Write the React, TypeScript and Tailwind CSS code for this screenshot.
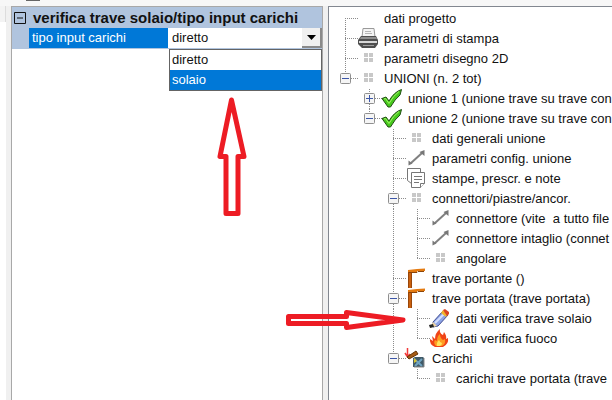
import type { ReactNode } from "react";

type IconName = "none" | "printer" | "dots" | "check" | "line" | "copy" | "beam" | "pencil" | "flame" | "load";

// one letter per 24px column:
// " " empty, "f" first branch, "t" branch, "l" last branch, "v" line passing through,
// "m" collapse box, "M" collapse box with line below, "p" expand box
type Row = { guides: string; icon: IconName; text: string };

const rows: Row[] = [
  { guides: "f", icon: "none", text: "dati progetto" },
  { guides: "t", icon: "printer", text: "parametri di stampa" },
  { guides: "t", icon: "dots", text: "parametri disegno 2D" },
  { guides: "m", icon: "dots", text: "UNIONI (n. 2 tot)" },
  { guides: " p", icon: "check", text: "unione 1 (unione trave su trave con" },
  { guides: " m", icon: "check", text: "unione 2 (unione trave su trave con" },
  { guides: "  t", icon: "dots", text: "dati generali unione" },
  { guides: "  t", icon: "line", text: "parametri config. unione" },
  { guides: "  t", icon: "copy", text: "stampe, prescr. e note" },
  { guides: "  M", icon: "dots", text: "connettori/piastre/ancor." },
  { guides: "  vt", icon: "line", text: "connettore (vite  a tutto file" },
  { guides: "  vt", icon: "line", text: "connettore intaglio (connet" },
  { guides: "  vl", icon: "dots", text: "angolare" },
  { guides: "  t", icon: "beam", text: "trave portante ()" },
  { guides: "  M", icon: "beam", text: "trave portata (trave portata)" },
  { guides: "  vt", icon: "pencil", text: "dati verifica trave solaio" },
  { guides: "  vl", icon: "flame", text: "dati verifica fuoco" },
  { guides: "  m", icon: "load", text: "Carichi" },
  { guides: "   l", icon: "dots", text: "carichi trave portata (trave" },
];

const icons: Record<IconName, ReactNode> = {
  none: null,
  printer: (
    <>
      <path d="M5 8L6-.5h11L18 8" fill="#f4f4f4" stroke="#9a9a9a" />
      <path d="M8 2.500h6M8 4.500h7" stroke="#b5b5b5" />
      <path d="M4 7h15l2 4v4l-3 4H5l-4-4v-4z" fill="#4f4f4f" />
      <path d="M4 8h15l1 2H3z" fill="#8f8f8f" />
      <path d="M2 12h18v2H2z" fill="#d8d8d8" />
      <path d="M6 16.500h11" stroke="#a0a0a0" />
    </>
  ),
  dots: <path d="M7 4h4v4H7zM12 4h4v4h-4zM7 9h4v4H7zM12 9h4v4h-4z" fill="#c8c8c8" />,
  check: (
    <>
      <path
        d="M1 9.500L5 8l3 4Q13 3 20.500.5L19 6Q14 10 9.500 18H7z"
        fill="#45c81c"
        stroke="#1f4d12"
        strokeLinejoin="round"
      />
      <path d="M3 10l1.500-.5 3.500 5Q12 7 18 2.500" stroke="#a4f36a" />
    </>
  ),
  line: (
    <>
      <path d="M6 14L17 4" stroke="#808080" strokeWidth="2" />
      <path d="M3.500 16.500v-5l4 3zM19.500 1v6l-5-4z" fill="#777" />
    </>
  ),
  copy: (
    <g fill="#fff" stroke="#777" strokeLinejoin="round">
      <path d="M2.500-.5h13v15h-9l-4-3z" />
      <path d="M6.500 3.500h13v11l-4 4h-9z" />
      <path d="M15.500 18.500v-4h4M9 7.500h8M9 10.500h8M9 13.500h5" />
    </g>
  ),
  beam: (
    <>
      <path d="M3 2h4v17H3z" fill="#c9600e" />
      <path d="M3.500 2v17M6.500 4v15" stroke="#9a470a" />
      <path d="M3 1l9-1 8-.5V2h-8v1H3z" fill="#e47b12" />
      <path d="M4 3.500h8l1-1h6" fill="none" stroke="#8b450a" />
    </>
  ),
  pencil: (
    <>
      <path d="M4 13L14 2l5 4-10 11-5 1z" fill="#8ea4e6" stroke="#404d91" />
      <path d="M6 14L16 4" stroke="#d5e0ff" strokeWidth="2" />
      <path d="M12 4l2-3 5 4-2 3z" fill="#f2b52c" />
      <path d="M14 1l2-1 4 3v2l-2 2z" fill="#d94425" />
      <path d="M4 13l4 4-4 1-3 1z" fill="#f1d5a0" />
      <path d="M0 16l4-1 1 3-4 1z" fill="#222" />
    </>
  ),
  flame: (
    <>
      <path d="M6 18Q0 15 1 10l3 2-1-5 3 3Q6 4 11 0q-1 4 3 6l1-3q3 4 2 7l2-1q1 6-5 9z" fill="#f04417" />
      <path d="M7 17q-3-3-1-6l2 1q0-5 3-7 0 4 3 6l2-1q1 5-3 7z" fill="#ff9b22" />
      <path d="M8 17q-1-3 2-6 1 3 3 3 0 2-2 3z" fill="#ffe45c" />
    </>
  ),
  load: (
    <>
      <path d="M2.500-1v8M0 4l2.500 4L5 5" fill="none" stroke="#f13a3a" strokeWidth="1.500" />
      <path d="M2 8l9-6 2 3-9 5z" fill="#a55a12" stroke="#633407" />
      <path d="M8 9l2-1h8l1 1v9H8z" fill="#405a68" />
      <path d="M9 10l8 7M17 10l-7 7" stroke="#6fa3c0" strokeWidth="2" />
      <path d="M9 9l3 3-3 2z" fill="#d6c32d" />
      <path d="M9 18h10V9" fill="none" stroke="#888" />
    </>
  ),
};

const lines: Record<string, string> = {
  f: "M12.500 9v11M12 9.500h14",
  t: "M12.500 0v20M12 9.500h14",
  l: "M12.500 0v10M12 9.500h14",
  v: "M12.500 0v20",
  m: "M12.500 0v5M18 9.500h8",
  M: "M12.500 0v5M12.500 15v5M18 9.500h8",
  p: "M12.500 0v5M12.500 15v5M18 9.500h8",
};

function Guide({ kind }: { kind: string }) {
  const drawing = (
    <svg width="24" height="20" fill="none" className="overflow-visible" aria-hidden="true">
      <path d={lines[kind]} stroke="#8c8c8c" strokeDasharray="1 1" />
      {"mMp".includes(kind) && (
        <>
          <rect x="7.500" y="4.500" width="10" height="10" rx="1" fill="#f5f5f5" stroke="#8f8f8f" />
          <path d={kind === "p" ? "M9 9.500h7M12.500 6v7" : "M9 9.500h7"} stroke="#3c56a8" />
        </>
      )}
    </svg>
  );
  if ("mMp".includes(kind)) {
    return (
      <button type="button" aria-label={kind === "p" ? "Espandi" : "Comprimi"} className="h-5 w-6 shrink-0">
        {drawing}
      </button>
    );
  }
  return <span className="h-5 w-6 shrink-0">{kind !== " " && drawing}</span>;
}

function TreeRow({ guides, icon, text }: Row) {
  return (
    <li className="flex h-5 items-center whitespace-pre">
      {guides.split("").map((kind, i) => (
        <Guide key={i} kind={kind} />
      ))}
      <svg width="24" height="20" fill="none" className="relative shrink-0 overflow-visible" aria-hidden="true">
        {icons[icon]}
      </svg>
      <span className="pl-[3px]">{text}</span>
    </li>
  );
}

function PropertyGrid() {
  return (
    <section className="min-w-0 border border-[#a8a8a8] bg-white">
      <div className="flex h-[21px] items-center bg-[#b0c4de]">
        <button type="button" aria-label="Comprimi" className="flex h-5 w-[21px] shrink-0 items-center pl-[2px]">
          <svg width="12" height="12" fill="none" stroke="#111" aria-hidden="true">
            <path d="M.5.5h11v11H.5zM3 6h6" />
          </svg>
        </button>
        <h2 className="text-[15px] leading-5 font-bold whitespace-nowrap">verifica trave solaio/tipo input carichi</h2>
      </div>
      <div className="flex h-[21px] border-b border-[#b0c4de]">
        <div className="w-[17px] shrink-0 bg-[#b0c4de]" />
        <label htmlFor="tipo" className="w-[139px] shrink-0 bg-[#0078d7] pl-[3px] leading-5 text-white">
          tipo input carichi
        </label>
        <div className="relative ml-px min-w-0 flex-1">
          <select id="tipo" defaultValue="diretto" className="h-5 w-full appearance-none bg-white pl-[3px] leading-5 outline-none">
            <option>diretto</option>
            <option>solaio</option>
          </select>
          <span className="pointer-events-none absolute top-0 right-0 flex h-5 w-5 items-center justify-center border-r-2 border-b-2 border-[#8a8a8a] bg-[#f0f0f0]">
            <svg width="9" height="5" aria-hidden="true">
              <path d="M0 0h9L4.500 5z" fill="#000" />
            </svg>
          </span>
          <ul className="absolute top-[21px] right-0 left-0 border border-[#646464] bg-white leading-5">
            <li className="pl-[2px]">diretto</li>
            <li className="bg-[#0078d7] pl-[2px] text-white">solaio</li>
          </ul>
        </div>
      </div>
    </section>
  );
}

export default function App() {
  return (
    <div className="relative flex h-screen flex-col overflow-hidden bg-[#f0f0f0] font-['Liberation_Sans',Arial,sans-serif] text-[13px] text-[#111]">
      <header className="h-[6px] shrink-0 bg-[#f7f7f7] pl-[26px]">
        <div className="h-px w-[14px] bg-[#666]" />
      </header>
      <div className="flex min-h-0 flex-1">
        <div className="mr-[5px] flex w-[6px] shrink-0 flex-col">
          <div className="h-4 border-r border-[#dcdcdc] bg-[#f3f3f3]" />
          <div className="flex-1 bg-white" />
        </div>
        <main className="-mb-px grid min-w-0 flex-1 grid-cols-[312fr_284fr] gap-[5px]">
          <PropertyGrid />
          <nav className="min-w-0 overflow-hidden border-t border-l border-[#828790] bg-white pt-[2px] pl-1">
            <ul>
              {rows.map((row) => (
                <TreeRow key={row.text} {...row} />
              ))}
            </ul>
          </nav>
        </main>
      </div>

      {/* callout arrows */}
      <svg className="pointer-events-none absolute top-24 left-[216px]" width="32" height="120" fill="none" aria-hidden="true">
        <path d="M15.500 4L4 60.500h6v57h12v-57h6z" stroke="#ed1c24" strokeWidth="5" strokeLinejoin="round" />
      </svg>
      <svg className="pointer-events-none absolute top-[308px] left-[284px]" width="124" height="24" fill="none" aria-hidden="true">
        <path d="M4.500 8.500h58v-4L119 12 62.500 19.500v-4h-58z" stroke="#ed1c24" strokeWidth="5" strokeLinejoin="round" />
      </svg>
    </div>
  );
}
